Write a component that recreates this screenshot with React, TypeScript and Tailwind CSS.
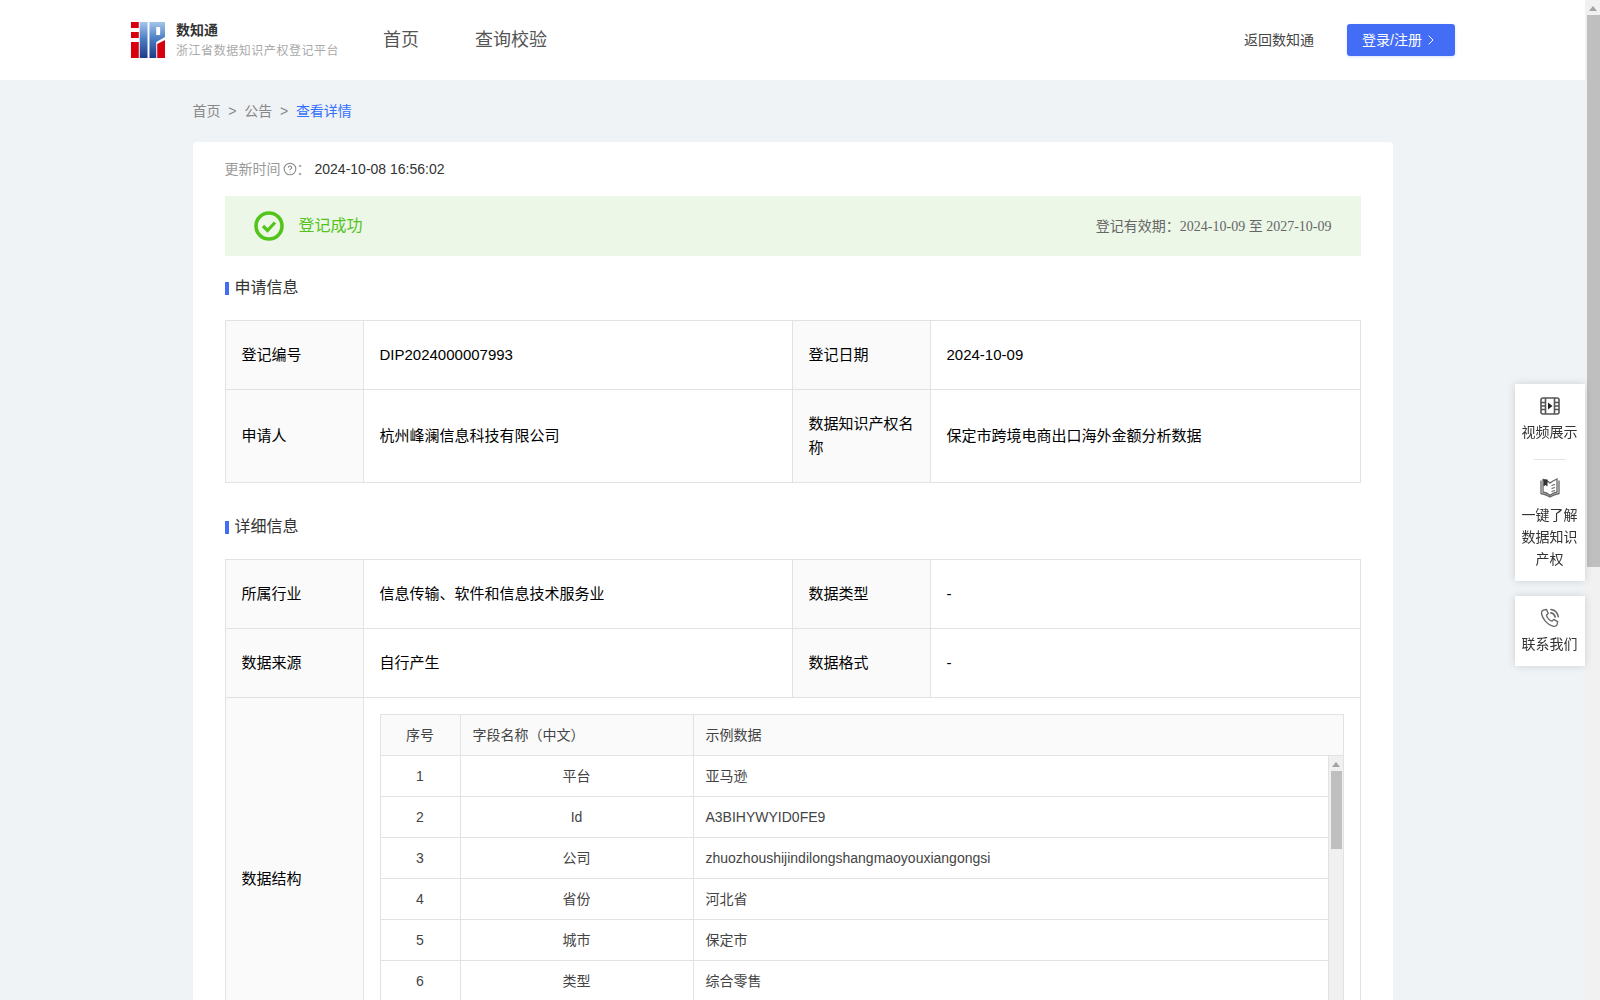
import React from 'react';
import { ChevronRight, CircleHelp } from 'lucide-react';

const FONT = "font-['Liberation_Sans','Noto_Sans_CJK_SC',sans-serif]";

const fields = [
  { no: 1, name: '平台', sample: '亚马逊' },
  { no: 2, name: 'Id', sample: 'A3BIHYWYID0FE9' },
  { no: 3, name: '公司', sample: 'zhuozhoushijindilongshangmaoyouxiangongsi' },
  { no: 4, name: '省份', sample: '河北省' },
  { no: 5, name: '城市', sample: '保定市' },
  { no: 6, name: '类型', sample: '综合零售' },
];

const Logo = () => (
  <svg width="34" height="36" viewBox="0 0 35 36" preserveAspectRatio="none" className="shrink-0">
    <defs>
      <linearGradient id="blueBar" x1="0" y1="0" x2="0" y2="1">
        <stop offset="0" stopColor="#a4c6ec" />
        <stop offset="0.45" stopColor="#4f80c4" />
        <stop offset="1" stopColor="#1c3a8a" />
      </linearGradient>
    </defs>
    <rect x="0" y="0" width="8" height="6" fill="#d9000d" />
    <rect x="0" y="10" width="8" height="6" fill="#d9000d" />
    <rect x="0" y="20" width="8" height="16" fill="#d9000d" />
    <rect x="9" y="0" width="8" height="36" fill="url(#blueBar)" />
    <path d="M19 0H35V15L26 20V36H19Z" fill="url(#blueBar)" />
    <rect x="26" y="5" width="4" height="8" fill="#fff" />
    <path d="M27 22L35 18V36H27Z" fill="#d9000d" />
  </svg>
);

const SectionTitle = ({ title }: { title: string }) => (
  <div className="flex h-[26px] items-center">
    <span className="mt-[2px] h-[13px] w-1 bg-[#446df6]" />
    <span className="mt-[1px] ml-[6px] text-base text-[#333]">{title}</span>
  </div>
);

const Label = ({ children }: { children: React.ReactNode }) => (
  <div className="flex items-center border-t border-l border-[#e2e2e2] bg-[#fafafa] px-4 py-[22px] text-[15px] leading-6 text-black">
    {children}
  </div>
);

const Value = ({ children }: { children: React.ReactNode }) => (
  <div className="flex items-center border-t border-l border-[#e2e2e2] px-4 py-[22px] text-[15px] leading-6 text-black">
    {children}
  </div>
);

const FilmIcon = () => (
  <svg width="20" height="18" viewBox="0 0 20 18" fill="none" stroke="#555" strokeWidth="1.6">
    <rect x="1" y="1" width="18" height="16" rx="2" />
    <path d="M5.5 1V17M14.5 1V17M1 5.5H5.5M1 9H5.5M1 12.5H5.5M14.5 5.5H19M14.5 9H19M14.5 12.5H19" />
    <path d="M8 5.5L12.5 9L8 12.5Z" fill="#222" stroke="none" />
  </svg>
);

const BookIcon = () => (
  <svg width="20" height="20" viewBox="0 0 20 20" fill="none" stroke="#666" strokeWidth="1.3">
    <path d="M1 2.5V15.5C4 16 7 17 10 19C13 17 16 16 19 15.5V2.5" />
    <path d="M3 1.5C6 2 8 3 10 5C12 3.5 14.5 2 17 1V14C14.5 14.5 12 15.5 10 17.5C8 15.5 6 14.5 3 14Z" />
    <path d="M3.5 1.5H7.5V8.5L5.5 7L3.5 8.5Z" fill="#333" stroke="none" />
    <path d="M11.5 7.5L15 6.5M11.5 10.5L15 9.5M11.5 13.5L15 12.5" />
  </svg>
);

const PhoneIcon = () => (
  <svg width="20" height="20" viewBox="0 0 20 20" fill="none" stroke="#666" strokeWidth="1.3" strokeLinecap="round" strokeLinejoin="round">
    <path d="M4 1.8L6.5 1.5L8.3 5.6L6.4 7.2C7 9.5 9.5 12.3 12 13.2L13.8 11.4L17.6 13.6L17.3 16.2C16.8 18 14.8 18.6 12.8 18.1C7.2 16.6 2.6 11 1.6 6C1.2 4 2.2 2.4 4 1.8Z" />
    <path d="M11 1.5C14.8 2 17.6 4.8 18.3 8.6" strokeWidth="1.6" />
    <path d="M10.8 4.8C13 5.2 14.7 6.8 15.2 9" strokeWidth="1.6" />
  </svg>
);

const FloatBar = () => (
  <div className="fixed top-[384px] right-[15px] flex w-[70px] flex-col gap-[15px] text-sm text-[#333]">
    <div className="flex h-[197px] flex-col items-center bg-white pt-3 shadow-[0_0_8px_rgba(0,0,0,0.14)]">
      <div className="flex h-5 items-center">
        <FilmIcon />
      </div>
      <div className="mt-[5px] -ml-[1px] leading-[22px]">视频展示</div>
      <div className="mt-[16px] h-px w-8 bg-[#e2e2e2]" />
      <div className="mt-[18px] flex h-5 items-center">
        <BookIcon />
      </div>
      <div className="mt-[6px] -ml-[1px] text-center leading-[22px]">
        一键了解
        <br />
        数据知识
        <br />
        产权
      </div>
    </div>
    <div className="flex h-[70px] flex-col items-center bg-white pt-3 shadow-[0_0_8px_rgba(0,0,0,0.14)]">
      <div className="flex h-5 items-center">
        <PhoneIcon />
      </div>
      <div className="mt-[5px] -ml-[1px] leading-[22px]">联系我们</div>
    </div>
  </div>
);

const FieldTable = () => (
  <div className="border border-[#e2e2e2] text-sm text-[#444]">
    <div className="grid h-10 grid-cols-[79px_233px_1fr] items-center bg-[#fafafa]">
      <div className="text-center">序号</div>
      <div className="flex h-full items-center border-l border-[#e2e2e2] px-3">字段名称（中文）</div>
      <div className="flex h-full items-center border-l border-[#e2e2e2] px-3">示例数据</div>
    </div>
    <div className="flex h-[288px] overflow-hidden">
      <div className="min-w-0 flex-1">
        {fields.map((f) => (
          <div key={f.no} className="grid h-[41px] grid-cols-[79px_233px_1fr] items-center border-t border-[#e2e2e2]">
            <div className="text-center">{f.no}</div>
            <div className="flex h-full items-center justify-center border-l border-[#e2e2e2] px-3">{f.name}</div>
            <div className="flex h-full items-center border-l border-[#e2e2e2] px-3">{f.sample}</div>
          </div>
        ))}
      </div>
      <div className="flex w-[15px] flex-col items-center border-t border-l border-[#e2e2e2] bg-[#f0f0f0]">
        <div className="mt-[6px] h-0 w-0 border-x-[4px] border-b-[5px] border-x-transparent border-b-[#a3a3a3]" />
        <div className="mt-[4px] ml-[1px] h-[78px] w-[11px] bg-[#bfbfbf]" />
      </div>
    </div>
  </div>
);

export default function App() {
  return (
    <div className={`flex h-screen overflow-hidden bg-[#f1f1f1] ${FONT}`}>
      <div className="h-full min-w-0 flex-1 overflow-hidden bg-[#eff3f6]">
        <header className="flex h-20 items-center bg-white pr-[130px] pl-[131px]">
          <Logo />
          <div className="ml-[11px] w-[207px]">
            <div className="text-sm leading-5 font-bold text-[#333]">数知通</div>
            <div className="mt-[1px] text-xs leading-5 tracking-[0.55px] text-[#aaa]">浙江省数据知识产权登记平台</div>
          </div>
          <nav className="flex gap-[56px] text-lg text-[#555]">
            <span>首页</span>
            <span>查询校验</span>
          </nav>
          <div className="ml-auto flex items-center gap-[33px]">
            <span className="text-sm text-[#444]">返回数知通</span>
            <button className="flex h-8 w-[108px] items-center rounded-[3px] bg-[#446df6] pl-[15px] text-sm text-white shadow-[0_1px_3px_rgba(68,109,246,0.2)]">
              登录/注册
              <ChevronRight className="ml-[1px] h-4 w-4" strokeWidth={1.5} />
            </button>
          </div>
        </header>

        <main className="mx-auto w-[1200px]">
          <div className="flex h-[62px] items-center gap-[7.75px] text-sm text-[#888]">
            <span>首页</span>
            <span>&gt;</span>
            <span>公告</span>
            <span>&gt;</span>
            <span className="text-[#3370ff]">查看详情</span>
          </div>

          <div className="rounded-t bg-white px-8 pb-8">
            <div className="flex h-[54px] items-center pb-[1px] text-sm">
              <span className="text-[#999]">更新时间</span>
              <CircleHelp className="ml-[2px] h-[14px] w-[14px] text-[#888]" strokeWidth={1.8} />
              <span className="mr-[4px] text-[#999]">：</span>
              <span className="text-[#333]">2024-10-08 16:56:02</span>
            </div>

            <div className="flex h-[60px] items-center bg-[#ecf7e8] pr-[29px] pl-[29px]">
              <svg width="30" height="30" viewBox="0 0 30 30" fill="none" stroke="#52c41a">
                <circle cx="15" cy="15" r="13" strokeWidth="3.6" />
                <path d="M9 15L13.5 19.5L21 11.5" strokeWidth="3.2" />
              </svg>
              <span className="ml-[15px] text-base text-[#52c41a]">登记成功</span>
              <span className="ml-auto text-sm text-[#666]">
                登记有效期：
                <span className="font-['Liberation_Serif','Noto_Sans_CJK_SC',serif]">2024-10-09 至 2027-10-09</span>
              </span>
            </div>

            <div className="mt-[18px]">
              <SectionTitle title="申请信息" />
            </div>

            <div className="mt-[20px] grid grid-cols-[138px_429px_138px_1fr] border-r border-b border-[#e2e2e2]">
              <Label>登记编号</Label>
              <Value>DIP2024000007993</Value>
              <Label>登记日期</Label>
              <Value>2024-10-09</Value>
              <Label>申请人</Label>
              <Value>杭州峰澜信息科技有限公司</Value>
              <Label>数据知识产权名称</Label>
              <Value>保定市跨境电商出口海外金额分析数据</Value>
            </div>

            <div className="mt-[30px]">
              <SectionTitle title="详细信息" />
            </div>

            <div className="mt-[20px] grid grid-cols-[138px_429px_138px_1fr] border-r border-b border-[#e2e2e2]">
              <Label>所属行业</Label>
              <Value>信息传输、软件和信息技术服务业</Value>
              <Label>数据类型</Label>
              <Value>-</Value>
              <Label>数据来源</Label>
              <Value>自行产生</Value>
              <Label>数据格式</Label>
              <Value>-</Value>
              <Label>数据结构</Label>
              <div className="col-span-3 border-t border-l border-[#e2e2e2] p-4">
                <FieldTable />
              </div>
            </div>
          </div>
        </main>
      </div>

      {/* page scrollbar */}
      <div className="flex h-full w-[15px] shrink-0 flex-col items-end bg-[#f1f1f1]">
        <div className="mx-auto mt-[6px] h-0 w-0 border-x-[4px] border-b-[5px] border-x-transparent border-b-[#a3a3a3]" />
        <div className="mt-1 h-[552px] w-[13px] bg-[#bfbfbf]" />
      </div>

      <FloatBar />
    </div>
  );
}
